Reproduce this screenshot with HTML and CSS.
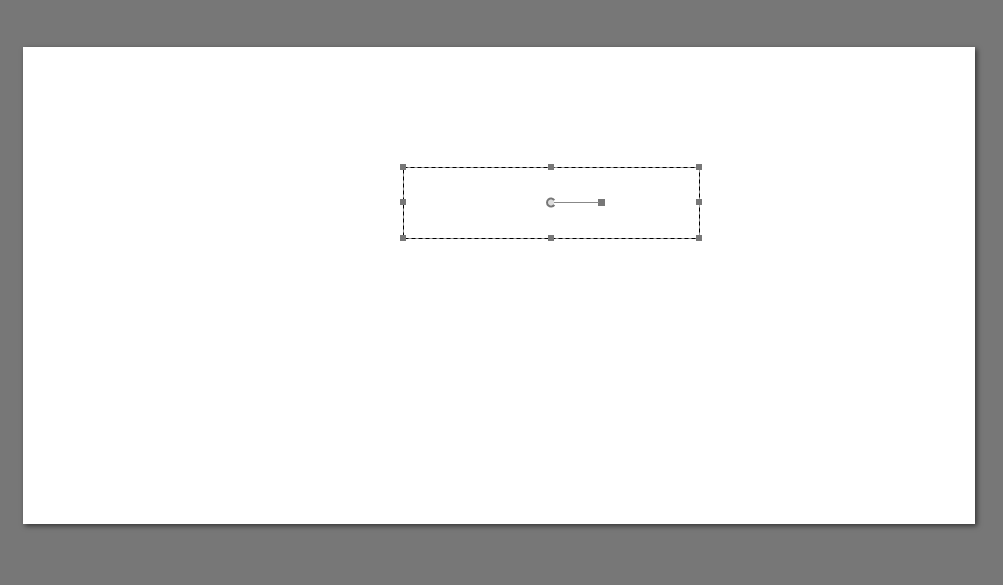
FILE: index.html
```html
<!DOCTYPE html>
<html>
<head>
<meta charset="utf-8">
<link rel="stylesheet" href="styles.css">
</head>
<body>
<div class="stage">
  <div class="canvas">
    <svg class="overlay" width="952" height="477" viewBox="0 0 952 477">
      <rect x="380.5" y="120.5" width="296" height="71" fill="none" stroke="#999" stroke-width="1"/>
      <rect x="380.5" y="120.5" width="296" height="71" fill="none" stroke="#000" stroke-width="1" stroke-dasharray="4 3"/>
      <g fill="#777">
        <rect x="377" y="117" width="6" height="6"/>
        <rect x="525" y="117" width="6" height="6"/>
        <rect x="673" y="117" width="6" height="6"/>
        <rect x="377" y="152" width="6" height="6"/>
        <rect x="673" y="152" width="6" height="6"/>
        <rect x="377" y="188" width="6" height="6"/>
        <rect x="525" y="188" width="6" height="6"/>
        <rect x="673" y="188" width="6" height="6"/>
        <rect x="575" y="152" width="7" height="7"/>
      </g>
      <line x1="531" y1="155.5" x2="576" y2="155.5" stroke="#888" stroke-width="1"/>
      <circle cx="528" cy="155.5" r="3" fill="#ddd"/>
      <path d="M531.3 153.2 A4 4 0 1 0 531.3 157.8" fill="none" stroke="#777" stroke-width="2"/>
    </svg>
  </div>
</div>
</body>
</html>
```
FILE: styles.css
```css
html, body {
  margin: 0;
  padding: 0;
  background: #777777;
  width: 1003px;
  height: 585px;
  overflow: hidden;
}
.stage {
  padding: 47px 0 0 23px;
}
.canvas {
  position: relative;
  width: 952px;
  height: 477px;
  background: #ffffff;
  box-shadow: 2px 2px 5px rgba(0, 0, 0, 0.55);
}
.overlay {
  position: absolute;
  left: 0;
  top: 0;
  display: block;
}
```
